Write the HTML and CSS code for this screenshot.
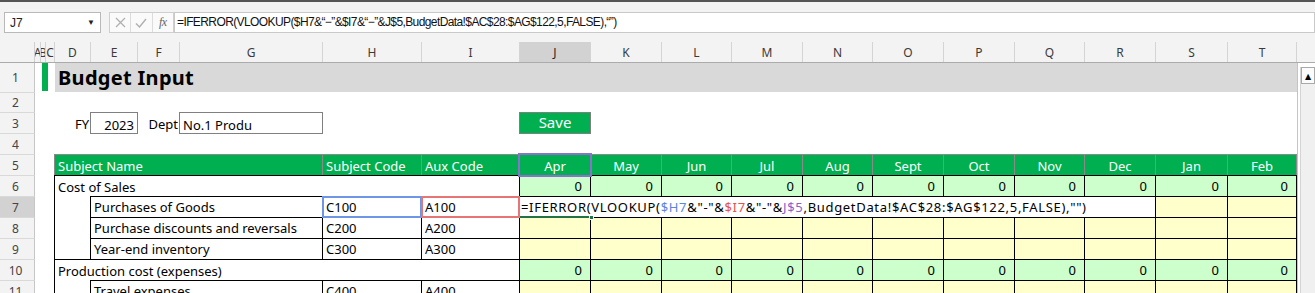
FILE: index.html
```html
<!DOCTYPE html>
<html lang="en">
<head>
<meta charset="utf-8">
<title>Budget Input</title>
<link rel="stylesheet" href="styles.css">
</head>
<body>
<div class="app">
  <div class="edge"></div>
  <div class="fbar">
    <div class="namebox"><span class="nb-text">J7</span><span class="nb-dd">&#9660;</span></div>
    <div class="fbtns">
      <span class="fbtn"><svg width="11" height="11" viewBox="0 0 11 11"><path d="M1 1L10 10M10 1L1 10" stroke="#b0b0b0" stroke-width="1.3" fill="none"/></svg></span>
      <span class="fbtn"><svg width="12" height="10" viewBox="0 0 12 10"><path d="M1 5.5L4.5 9L11 1" stroke="#b0b0b0" stroke-width="1.4" fill="none"/></svg></span>
      <span class="fbtn fx">fx</span>
    </div>
    <div class="finput">=IFERROR(VLOOKUP($H7&amp;“−”&amp;$I7&amp;“−”&amp;J$5,BudgetData!$AC$28:$AG$122,5,FALSE),“”)</div>
  </div>

  <div class="colhdr">
    <div class="corner"></div>
    <div class="ch">A</div><div class="ch">B</div><div class="ch">C</div>
    <div class="ch">D</div><div class="ch">E</div><div class="ch">F</div><div class="ch">G</div>
    <div class="ch">H</div><div class="ch">I</div><div class="ch sel">J</div><div class="ch">K</div>
    <div class="ch">L</div><div class="ch">M</div><div class="ch">N</div><div class="ch">O</div>
    <div class="ch">P</div><div class="ch">Q</div><div class="ch">R</div><div class="ch">S</div>
    <div class="ch">T</div><div class="ch-sb"></div>
  </div>

  <div class="body">
    <div class="rows">
      <div class="r r1">
        <div class="rh">1</div>
        <div></div>
        <div class="bar s2"><i class="bar-fill"></i></div>
        <div class="title s17">Budget Input</div>
      </div>
      <div class="r r2"><div class="rh">2</div></div>
      <div class="r">
        <div class="rh">3</div><div class="s3"></div>
        <div class="c lbl">FY</div>
        <div class="c box right">2023</div>
        <div class="c lbl">Dept</div>
        <div class="c box">No.1 Produ</div>
        <div></div><div></div>
        <div class="c save">Save</div>
      </div>
      <div class="r"><div class="rh">4</div></div>
      <div class="r">
        <div class="rh">5</div><div class="s3"></div>
        <div class="c hd s4">Subject Name</div>
        <div class="c hd">Subject Code</div>
        <div class="c hd">Aux Code</div>
        <div class="c hd ctr ref refp">Apr</div>
        <div class="c hd ctr">May</div>
        <div class="c hd ctr">Jun</div>
        <div class="c hd ctr">Jul</div>
        <div class="c hd ctr">Aug</div>
        <div class="c hd ctr">Sept</div>
        <div class="c hd ctr">Oct</div>
        <div class="c hd ctr">Nov</div>
        <div class="c hd ctr">Dec</div>
        <div class="c hd ctr">Jan</div>
        <div class="c hd ctr">Feb</div>
      </div>
      <div class="r">
        <div class="rh">6</div><div class="s3"></div>
        <div class="c tl s6">Cost of Sales</div>
        <div class="c bx num">0</div><div class="c bx num">0</div><div class="c bx num">0</div>
        <div class="c bx num">0</div><div class="c bx num">0</div><div class="c bx num">0</div>
        <div class="c bx num">0</div><div class="c bx num">0</div><div class="c bx num">0</div>
        <div class="c bx num">0</div><div class="c bx num">0</div>
      </div>
      <div class="r">
        <div class="rh sel">7</div><div class="s3"></div>
        <div class="c lb"></div>
        <div class="c bx s3">Purchases of Goods</div>
        <div class="c bx ref refb">C100</div>
        <div class="c bx ref refr">A100</div>
        <div class="c bx s9 fcell"><span class="ftext">=IFERROR(VLOOKUP(<span class="tb">$H7</span>&amp;"-"&amp;<span class="tr">$I7</span>&amp;"-"&amp;<span class="tp">J$5</span>,BudgetData!$AC$28:$AG$122,5,FALSE),"")</span><i class="sel-line"></i><i class="handle"></i></div>
        <div class="c bx inp"></div><div class="c bx inp"></div>
      </div>
      <div class="r">
        <div class="rh">8</div><div class="s3"></div>
        <div class="c lb"></div>
        <div class="c bx s3">Purchase discounts and reversals</div>
        <div class="c bx">C200</div>
        <div class="c bx">A200</div>
        <div class="c bx inp"></div><div class="c bx inp"></div><div class="c bx inp"></div>
        <div class="c bx inp"></div><div class="c bx inp"></div><div class="c bx inp"></div>
        <div class="c bx inp"></div><div class="c bx inp"></div><div class="c bx inp"></div>
        <div class="c bx inp"></div><div class="c bx inp"></div>
      </div>
      <div class="r">
        <div class="rh">9</div><div class="s3"></div>
        <div class="c lb"></div>
        <div class="c bx s3">Year-end inventory</div>
        <div class="c bx">C300</div>
        <div class="c bx">A300</div>
        <div class="c bx inp"></div><div class="c bx inp"></div><div class="c bx inp"></div>
        <div class="c bx inp"></div><div class="c bx inp"></div><div class="c bx inp"></div>
        <div class="c bx inp"></div><div class="c bx inp"></div><div class="c bx inp"></div>
        <div class="c bx inp"></div><div class="c bx inp"></div>
      </div>
      <div class="r">
        <div class="rh">10</div><div class="s3"></div>
        <div class="c tl s6">Production cost (expenses)</div>
        <div class="c bx num">0</div><div class="c bx num">0</div><div class="c bx num">0</div>
        <div class="c bx num">0</div><div class="c bx num">0</div><div class="c bx num">0</div>
        <div class="c bx num">0</div><div class="c bx num">0</div><div class="c bx num">0</div>
        <div class="c bx num">0</div><div class="c bx num">0</div>
      </div>
      <div class="r">
        <div class="rh">11</div><div class="s3"></div>
        <div class="c lb"></div>
        <div class="c bx s3">Travel expenses</div>
        <div class="c bx">C400</div>
        <div class="c bx">A400</div>
        <div class="c bx inp"></div><div class="c bx inp"></div><div class="c bx inp"></div>
        <div class="c bx inp"></div><div class="c bx inp"></div><div class="c bx inp"></div>
        <div class="c bx inp"></div><div class="c bx inp"></div><div class="c bx inp"></div>
        <div class="c bx inp"></div><div class="c bx inp"></div>
      </div>
    </div>
    <div class="vscroll">
      <div class="track"><div class="up">&#9650;</div></div>
    </div>
  </div>
</div>
</body>
</html>
```

FILE: styles.css
```css
* { box-sizing: border-box; }

:root {
  --cols: 35px 6px 5px 9px 36px 47px 42px 143px 99px 98px 71px 71px 70px 71px 70px 71px 71px 70px 71px 72px 69px;
}

html, body {
  margin: 0;
  padding: 0;
  width: 1315px;
  height: 293px;
  overflow: hidden;
  background: #fff;
}

body {
  font-family: "Noto Sans", "DejaVu Sans", sans-serif;
}

.app {
  width: 1315px;
  height: 293px;
  overflow: hidden;
  background: #f3f3f3;
  display: flex;
  flex-direction: column;
}

.edge {
  flex: none;
  height: 2px;
  background: #555;
}

/* formula bar */
.fbar {
  flex: none;
  height: 39px;
  display: flex;
  align-items: flex-start;
  padding-top: 10px;
}

.namebox {
  margin-left: 4px;
  width: 97px;
  height: 21px;
  background: #fff;
  border: 1px solid #b9b9b9;
  display: flex;
  align-items: center;
  justify-content: space-between;
  padding: 0 5px 0 5px;
  font: 12px "Liberation Sans", sans-serif;
  color: #222;
}

.nb-dd {
  font-size: 8px;
  color: #222;
}

.fbtns {
  margin-left: 8px;
  width: 65px;
  height: 21px;
  display: flex;
  border: 1px solid #cfcfcf;
  background: #fafafa;
}

.fbtn {
  flex: 1;
  display: flex;
  align-items: center;
  justify-content: center;
  border-right: 1px solid #dcdcdc;
}

.fbtn:last-child { border-right: none; }

.fx {
  font: italic 12px "Liberation Serif", serif;
  color: #666;
  letter-spacing: -0.5px;
}

.finput {
  flex: 1;
  height: 21px;
  background: #fff;
  border: 1px solid #c9c9c9;
  padding-left: 2px;
  font: 12px "Liberation Sans", sans-serif;
  line-height: 19px;
  color: #111;
  white-space: nowrap;
  overflow: hidden;
  letter-spacing: -0.6px;
}

/* column header */
.colhdr {
  flex: none;
  height: 22px;
  display: grid;
  grid-template-columns: var(--cols) 18px;
  border-bottom: 1px solid #ababab;
}

.corner {
  border-right: 1px solid #d0d0d0;
  margin-top: 1px;
}

.ch {
  margin-top: 1px;
  border-right: 1px solid #d4d4d4;
  display: flex;
  align-items: center;
  justify-content: center;
  font: 12px "Noto Sans", sans-serif;
  color: #3a3a3a;
  overflow: hidden;
  white-space: nowrap;
}

.ch.sel {
  background: #d2d2d2;
  color: #222;
}

/* sheet body */
.body {
  flex: 1;
  display: flex;
  min-height: 0;
  background: #fff;
}

.rows {
  width: 1297px;
  flex: none;
}

.r {
  display: grid;
  grid-template-columns: var(--cols);
  height: 21px;
}

.r1 { height: 30px; }
.r2 { height: 20px; }

.rh {
  background: #f3f3f3;
  border-right: 1px solid #c6c6c6;
  border-bottom: 1px solid #d9d9d9;
  display: flex;
  align-items: center;
  justify-content: center;
  padding-right: 3px;
  font: 12px "Noto Sans", sans-serif;
  color: #444;
}

.rh.sel { background: #d2d2d2; }

.s2 { grid-column: span 2; }
.s3 { grid-column: span 3; }
.s4 { grid-column: span 4; }
.s6 { grid-column: span 6; }
.s9 { grid-column: span 9; }
.s17 { grid-column: span 17; }

/* title row */
.bar {
  padding: 0 0 1px 1px;
}

.bar-fill {
  display: block;
  width: 6px;
  height: 28px;
  background: #00b050;
}

.title {
  background: #d9d9d9;
  margin-bottom: 1px;
  padding: 2px 0 0 3px;
  font-weight: 700;
  font-size: 20px;
  line-height: 26px;
  color: #000;
  letter-spacing: 0.3px;
}

/* cells */
.c {
  display: flex;
  align-items: center;
  padding: 0 3px;
  white-space: nowrap;
  overflow: hidden;
  min-width: 0;
  font-size: 13px;
  color: #000;
}

.bx {
  border: 1px solid #000;
  margin: -1px 0 0 -1px;
}

.lb {
  border-left: 1px solid #000;
  margin-left: -1px;
}

.tl {
  border-top: 1px solid #000;
  border-left: 1px solid #000;
  margin: -1px 0 0 -1px;
}

.lbl {
  justify-content: flex-end;
  padding-right: 2px;
}

.box {
  border: 1px solid #808080;
  margin: -1px 0 0 -1px;
  align-items: flex-start;
  padding-top: 3px;
}

.box.right {
  justify-content: flex-end;
  padding-right: 3px;
}

.save {
  border: 1px solid #7f7f7f;
  margin: -1px 0 0 -1px;
  background: #00b050;
  color: #fff;
  font-size: 15px;
  justify-content: center;
  padding-bottom: 2px;
}

.hd {
  background: #00b050;
  color: #fff;
  border: 1px solid #8a8a8a;
  margin: -1px 0 0 -1px;
  padding-top: 2px;
}

.hd.ctr { justify-content: center; }

.num {
  background: #ccffcc;
  justify-content: flex-end;
  padding-right: 8px;
}

.inp { background: #ffffcc; }

/* reference highlights */
.ref {
  position: relative;
  overflow: visible;
}

.ref::after {
  content: "";
  position: absolute;
  inset: -1px;
  border: 2px solid;
  z-index: 1;
  pointer-events: none;
}

.refb::after { border-color: #6f96e6; }
.refr::after { border-color: #e77575; }
.refp::after { inset: -2px; border-color: #8d6fcf; }

/* formula being edited */
.fcell {
  background: #fff;
  position: relative;
  overflow: visible;
  padding-left: 1px;
}

.ftext {
  white-space: nowrap;
  letter-spacing: 0.68px;
}

.tb { color: #5b86e0; }
.tr { color: #e5534b; }
.tp { color: #8a62c9; }

.sel-line {
  position: absolute;
  left: -1px;
  bottom: -1px;
  width: 72px;
  height: 2px;
  background: #217346;
}

.handle {
  position: absolute;
  left: 69px;
  bottom: -3px;
  width: 5px;
  height: 5px;
  background: #217346;
  border: 1px solid #fff;
  z-index: 2;
}

/* scrollbar */
.vscroll {
  flex: 1;
  border-left: 1px solid #c4c4c4;
  padding: 4px 0 0 2px;
  background: #fff;
}

.track {
  height: 100%;
  background: #f0f0f0;
  border-left: 1px solid #d4d4d4;
}

.up {
  height: 17px;
  border: 1px solid #a9a9a9;
  background: #fbfbfb;
  display: flex;
  align-items: center;
  justify-content: center;
  font-size: 8px;
  color: #000;
}
```
